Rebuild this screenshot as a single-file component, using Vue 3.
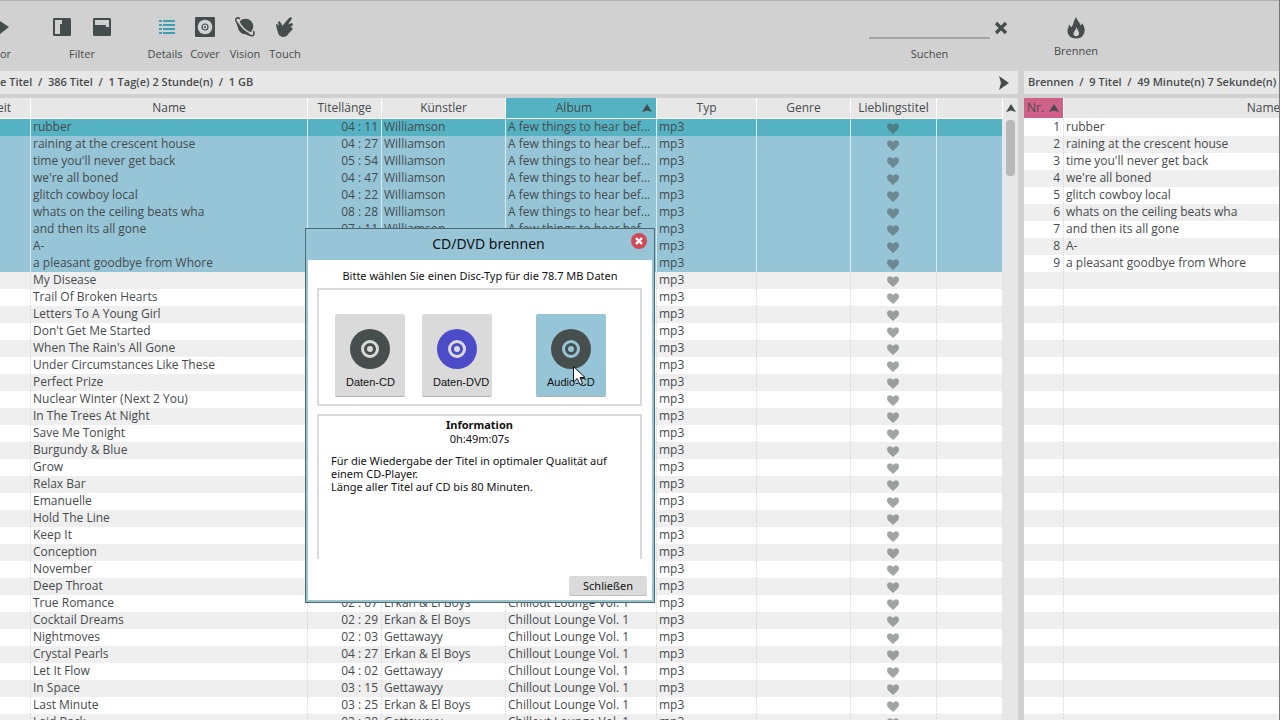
<script setup>
const names = [
  'rubber', 'raining at the crescent house', "time you'll never get back", "we're all boned",
  'glitch cowboy local', 'whats on the ceiling beats wha', 'and then its all gone', 'A-',
  'a pleasant goodbye from Whore', 'My Disease', 'Trail Of Broken Hearts', 'Letters To A Young Girl',
  "Don't Get Me Started", "When The Rain's All Gone", 'Under Circumstances Like These',
  'Perfect Prize', 'Nuclear Winter (Next 2 You)', 'In The Trees At Night', 'Save Me Tonight',
  'Burgundy & Blue', 'Grow', 'Relax Bar', 'Emanuelle', 'Hold The Line', 'Keep It', 'Conception',
  'November', 'Deep Throat', 'True Romance', 'Cocktail Dreams', 'Nightmoves', 'Crystal Pearls',
  'Let It Flow', 'In Space', 'Last Minute', 'Laid Back'
]
const lounge = 'Chillout Lounge Vol. 1'
const few = 'A few things to hear bef...'
const details = {
  0: ['04 : 11', 'Williamson', few],
  1: ['04 : 27', 'Williamson', few],
  2: ['05 : 54', 'Williamson', few],
  3: ['04 : 47', 'Williamson', few],
  4: ['04 : 22', 'Williamson', few],
  5: ['08 : 28', 'Williamson', few],
  6: ['07 : 11', 'Williamson', few],
  28: ['02 : 07', 'Erkan & El Boys', lounge],
  29: ['02 : 29', 'Erkan & El Boys', lounge],
  30: ['02 : 03', 'Gettawayy', lounge],
  31: ['04 : 27', 'Erkan & El Boys', lounge],
  32: ['04 : 02', 'Gettawayy', lounge],
  33: ['03 : 15', 'Gettawayy', lounge],
  34: ['03 : 25', 'Erkan & El Boys', lounge],
  35: ['02 : 28', 'Gettawayy', lounge]
}
const tracks = names.map((name, i) => {
  const [length = '', artist = '', album = ''] = details[i] || []
  return { name, length, artist, album, selected: i < 9 }
})
const burnList = names.map((name, i) => (i < 9 ? { nr: i + 1, name } : { nr: '', name: '' }))
const discs = [
  { label: 'Daten-CD', kind: 'dark' },
  { label: 'Daten-DVD', kind: 'violet' },
  { label: 'Audio-CD', kind: 'dark', active: true }
]
const slash = '\u00a0/\u00a0'
</script>

<template>
  <div class="app">
    <section class="library">
      <header class="toolbar">
        <button class="tool cut">
          <svg width="10" height="20" viewBox="0 0 10 20"><path d="M0 4 9 10 0 17Z" /></svg>
          <span>or</span>
        </button>
        <div class="filter">
          <div class="filter-icons">
            <button aria-label="Filter links">
              <svg width="18" height="20" viewBox="0 0 18 20"><path fill-rule="evenodd" d="M1 1H17L18 2V18L17 19H1L0 18V2ZM2 3V17H7V7H9V3Z" /></svg>
            </button>
            <button aria-label="Filter oben">
              <svg width="18" height="20" viewBox="0 0 18 20"><path fill-rule="evenodd" d="M1 1H17L18 2V18L17 19H1L0 18V2ZM2 3V8H13V10H16V3Z" /></svg>
            </button>
          </div>
          <span>Filter</span>
        </div>
        <nav class="views">
          <button class="tool">
            <svg class="teal" width="20" height="20" viewBox="0 0 20 20"><path d="M4 3h3v2H4zM8 3h12v2H8zM4 7h3v2H4zM8 7h12v2H8zM4 11h3v2H4zM8 11h12v2H8zM4 15h3v2H4zM8 15h12v2H8z" /></svg>
            <span>Details</span>
          </button>
          <button class="tool">
            <svg width="20" height="20" viewBox="0 0 20 20">
              <rect width="20" height="20" rx="1" />
              <circle cx="10" cy="10" r="7.3" fill="#d2d3d3" />
              <circle cx="10" cy="10" r="3" fill="none" stroke="#454d4c" stroke-width="1.2" />
              <circle cx="10" cy="10" r="1" />
            </svg>
            <span>Cover</span>
          </button>
          <button class="tool">
            <svg width="20" height="20" viewBox="0 0 20 20">
              <circle cx="10.500" cy="9.500" r="7.800" />
              <path d="M3 2.500C5 9 11 15 17.800 16.800" fill="none" stroke="#d1d1d1" stroke-width="1.500" />
              <path d="M5 1.500Q0-.5 1 4C3 10 10 17.500 16.500 18.800Q20 19 18.500 14" fill="none" stroke="#454d4c" stroke-width="1.600" />
            </svg>
            <span>Vision</span>
          </button>
          <button class="tool">
            <svg width="20" height="20" viewBox="0 0 20 20"><path d="M14 1Q16.500-.5 17 1.500L13 7.500 16.500 6Q18.500 6.500 17.500 8.500L15 10.200 17 10.500Q18.500 12 16.500 13.500L14 16Q12 20 8 20Q4 19.500 3 16L1 8Q1 6.500 2.500 7.500L3.800 9 3 5Q4.500 3.500 5.500 5.500L7.500 8.800Z" /></svg>
            <span>Touch</span>
          </button>
        </nav>
        <div class="search">
          <div class="search-row">
            <input id="search" type="text" />
            <button aria-label="Suche leeren">
              <svg width="14" height="14" viewBox="0 0 14 14"><path d="M2 2 12 12M12 2 2 12" fill="none" stroke="#454d4c" stroke-width="3.200" /></svg>
            </button>
          </div>
          <label for="search">Suchen</label>
        </div>
      </header>
      <div class="info">
        <span>e Titel {{ slash }} 386 Titel {{ slash }} 1 Tag(e) 2 Stunde(n) {{ slash }} 1 GB</span>
        <button class="play" aria-label="Weiter">
          <svg width="12" height="14" viewBox="0 0 12 14"><path d="M1 0 11 7 1 14 3 7Z" /></svg>
        </button>
      </div>
      <div class="list">
        <table class="grid main">
          <colgroup>
            <col class="c-time" /><col class="c-name" /><col class="c-length" /><col class="c-artist" />
            <col class="c-album" /><col class="c-type" /><col class="c-genre" /><col class="c-fav" /><col />
          </colgroup>
          <thead>
            <tr>
              <th><div class="clip"><span>eit</span></div></th>
              <th>Name</th>
              <th>Titellänge</th>
              <th>Künstler</th>
              <th class="sorted"><div class="sort"><span>Album</span><svg width="10" height="8" viewBox="0 0 10 8"><path d="M5 0 10 8 5 6.500 0 8Z" /></svg></div></th>
              <th>Typ</th>
              <th>Genre</th>
              <th>Lieblingstitel</th>
              <th></th>
            </tr>
          </thead>
          <tbody>
            <tr v-for="(t, i) in tracks" :key="i" :class="{ selected: t.selected, current: i === 0 }">
              <td></td>
              <td>{{ t.name }}</td>
              <td class="num">{{ t.length }}</td>
              <td>{{ t.artist }}</td>
              <td>{{ t.album }}</td>
              <td>mp3</td>
              <td></td>
              <td class="fav"><svg width="12" height="11" viewBox="0 0 12 11"><path d="M6 11 1 6.200Q-1 3 1 1Q3.800-1 6 2Q8.200-1 11 1Q13 3 11 6.200Z" /></svg></td>
              <td></td>
            </tr>
          </tbody>
        </table>
        <div class="scroll">
          <svg width="10" height="8" viewBox="0 0 10 8"><path d="M5 0 10 8 5 6.500 0 8Z" /></svg>
          <div class="thumb"></div>
        </div>
      </div>
    </section>

    <aside class="burn">
      <header class="toolbar">
        <button class="tool fire">
          <svg width="18" height="22" viewBox="0 0 18 22"><path fill-rule="evenodd" d="M9.500 0C9 3 13 5 13.500 8.500Q15 7.500 14.800 6C18 10 18.500 14 16.500 17.500C15 20.500 12 21.500 9 21.500C4 21.500 .5 18.500 .5 14C.5 11.500 2 10 2 7.500Q3.500 8.500 4 10.500C7 8 6 3.500 9.500 0ZM10 9.500C9.500 12.500 6.500 14 6.500 17C6.500 20 11.500 20 12 17C12.500 14 9.500 13 10 9.500Z" /></svg>
          <span>Brennen</span>
        </button>
      </header>
      <div class="info"><span>Brennen {{ slash }} 9 Titel {{ slash }} 49 Minute(n) 7 Sekunde(n)</span></div>
      <div class="list">
        <table class="grid side">
          <colgroup><col class="c-nr" /><col /></colgroup>
          <thead>
            <tr>
              <th class="pink"><div class="nr"><span>Nr.</span><svg width="10" height="8" viewBox="0 0 10 8"><path d="M5 0 10 8 5 6.500 0 8Z" /></svg></div></th>
              <th>Name</th>
            </tr>
          </thead>
          <tbody>
            <tr v-for="(b, i) in burnList" :key="i">
              <td class="num">{{ b.nr }}</td>
              <td>{{ b.name }}</td>
            </tr>
          </tbody>
        </table>
      </div>
    </aside>

    <div class="dialog" role="dialog" aria-labelledby="dialog-title">
      <div class="titlebar">
        <h1 id="dialog-title">CD/DVD brennen</h1>
        <button class="close" aria-label="Fenster schließen">
          <svg width="16" height="16" viewBox="0 0 16 16"><circle cx="8" cy="8" r="8" fill="#ce4a56" /><path d="M5 5 11 11M11 5 5 11" stroke="#fff" stroke-width="2.400" /></svg>
        </button>
      </div>
      <p class="message">Bitte wählen Sie einen Disc-Typ für die 78.7 MB Daten</p>
      <div class="discs">
        <button v-for="d in discs" :key="d.label" class="disc" :class="[d.kind, { active: d.active }]">
          <svg width="40" height="40" viewBox="0 0 40 40">
            <circle class="plate" cx="20" cy="20" r="20" />
            <circle class="ring" cx="20" cy="20" r="7.500" />
            <circle class="hub" cx="20" cy="20" r="3" />
          </svg>
          <span>{{ d.label }}</span>
        </button>
      </div>
      <div class="details">
        <h2>Information</h2>
        <p class="time">0h:49m:07s</p>
        <p class="text">Für die Wiedergabe der Titel in optimaler Qualität auf einem CD-Player.<br />Länge aller Titel auf CD bis 80 Minuten.</p>
      </div>
      <div class="actions"><button>Schließen</button></div>
      <svg class="cursor" width="13" height="20" viewBox="0 0 13 20"><path d="M.5.5V16L4.300 12.500 7 18.500 9.500 17.500 7 11.500H12Z" fill="#fff" stroke="#111" /></svg>
    </div>
  </div>
</template>

<style>
body {
  margin: 0;
  overflow: hidden;
}
</style>

<style scoped>
.app {
  position: relative;
  display: flex;
  gap: 6px;
  height: 100vh;
  overflow: hidden;
  box-sizing: border-box;
  background: #d1d1d1;
  border-right: 1px solid #777;
  color: #454b4c;
  font: 12px/17px "Open Sans", "Noto Sans", sans-serif;
}
button {
  padding: 0;
  border: 0;
  background: none;
  color: inherit;
  font: inherit;
}
svg {
  display: block;
  fill: #454d4c;
}
.library {
  flex: 1;
  min-width: 0;
  display: flex;
  flex-direction: column;
}
.burn {
  width: 255px;
  display: flex;
  flex-direction: column;
  overflow: hidden;
}
.toolbar {
  display: flex;
  height: 71px;
  padding-top: 17px;
  box-sizing: border-box;
  font-size: 11px;
}
.app::before {
  content: "";
  position: absolute;
  inset: 0 0 auto;
  height: 1px;
  background: #b0b0b0;
}
.tool {
  display: flex;
  flex-direction: column;
  align-items: center;
  width: 40px;
  height: 46px;
  gap: 8px;
}
.cut {
  width: 20px;
  align-items: flex-start;
}
.filter {
  display: flex;
  flex-direction: column;
  align-items: center;
  gap: 8px;
  width: 80px;
  margin-left: 22px;
}
.filter-icons {
  display: flex;
  gap: 22px;
}
.views {
  display: flex;
  margin-left: 23px;
}
.teal {
  fill: #3f9fb4;
}
.search {
  margin-left: auto;
  margin-right: 10px;
}
.search-row {
  display: flex;
  align-items: center;
  gap: 4px;
  height: 22px;
}
.search input {
  width: 121px;
  height: 22px;
  box-sizing: border-box;
  padding: 0 2px;
  border: 0;
  border-bottom: 2px solid #a5a5a5;
  background: none;
  outline: none;
}
.search label {
  display: block;
  width: 121px;
  margin-top: 6px;
  text-align: center;
}
.fire {
  width: 60px;
  margin-left: 22px;
  gap: 3px;
}
.info {
  display: flex;
  align-items: center;
  justify-content: space-between;
  height: 23px;
  margin-bottom: 4px;
  background: #e7e7e7;
  font-size: 11px;
  font-weight: 600;
  white-space: nowrap;
}
.info span {
  padding-bottom: 2px;
}
.burn .info {
  padding-left: 4px;
}
.play {
  margin-right: 8px;
}
.list {
  flex: 1;
  min-height: 0;
  display: flex;
  overflow: hidden;
  background: #e7e7e7;
}
.grid {
  table-layout: fixed;
  border-collapse: separate;
  border-spacing: 0;
  align-self: flex-start;
}
.main {
  flex: 1;
  width: 100%;
}
.side {
  flex: none;
  width: 440px;
}
.c-time { width: 31px; }
.c-name { width: 277px; }
.c-length { width: 74px; }
.c-artist { width: 124px; }
.c-album { width: 151px; }
.c-type { width: 100px; }
.c-genre { width: 94px; }
.c-fav { width: 86px; }
.c-nr { width: 40px; }
th {
  height: 20px;
  padding: 0;
  border-right: 1px solid #fff;
  border-bottom: 1px solid #fff;
  background: #e7e7e7;
  font-weight: 400;
  line-height: 20px;
}
th.sorted {
  background: #55b2c3;
}
th.pink {
  background: #cf6088;
}
.clip {
  display: flex;
  justify-content: flex-end;
  padding-right: 19px;
  overflow: hidden;
}
.sort {
  display: grid;
  grid-template-columns: 1fr auto;
  align-items: center;
  padding: 0 4px 0 0;
}
.nr {
  display: flex;
  align-items: center;
  justify-content: space-between;
  padding: 0 4px 0 3px;
}
td {
  height: 17px;
  padding: 0 2px 2px;
  box-sizing: border-box;
  border-right: 1px dotted #d8d8d8;
  background: #fff;
  line-height: 15px;
  white-space: nowrap;
  overflow: hidden;
}
tr:nth-child(even) td {
  background: #efefef;
}
tr.selected td {
  background: #97c5d8;
  border-right: 1px solid #d9eaf0;
}
tr.current td {
  background: #55b2c3;
}
.num {
  text-align: right;
  padding-right: 3px;
}
td.fav {
  padding: 1px 2px 0 0;
}
.fav svg {
  margin: 0 auto;
  opacity: .5;
}
.scroll {
  width: 15px;
  display: flex;
  flex-direction: column;
  align-items: center;
  gap: 8px;
  padding-top: 6px;
}
.thumb {
  width: 9px;
  height: 56px;
  border-radius: 4px;
  background: #b8b8b8;
}
.dialog {
  position: absolute;
  left: 305px;
  top: 228px;
  width: 350px;
  height: 375px;
  box-sizing: border-box;
  border: 1px solid #4a6874;
  background: #fff;
  box-shadow: inset 0 0 0 2px #98c6cc;
  padding: 0 2px 2px;
  color: #111;
  font-family: "Noto Sans", sans-serif;
  font-size: 11px;
  line-height: 13px;
}
.titlebar {
  display: grid;
  grid-template-columns: 1fr auto;
  height: 31px;
  margin: 0 -2px;
  padding: 0 7px 0 40px;
  background: #98c4d7;
}
h1, h2, p {
  margin: 0;
}
h1 {
  font-size: 14px;
  font-weight: 400;
  line-height: 30px;
  text-align: center;
}
.close {
  align-self: start;
  margin-top: 4px;
}
.message {
  padding: 9px 0 6px;
  text-align: center;
}
.discs {
  display: flex;
  gap: 17px;
  height: 118px;
  margin: 0 10px 8px 9px;
  padding: 24px 16px 0;
  box-sizing: border-box;
  border: 2px solid #d9d9d9;
}
.disc {
  display: flex;
  flex-direction: column;
  align-items: flex-start;
  gap: 7px;
  width: 70px;
  height: 83px;
  padding: 15px 0 0 11px;
  box-sizing: border-box;
  border-bottom: 1px solid #b0b0b0;
  border-radius: 2px;
  background: #dadada;
  font-family: "Liberation Sans", sans-serif;
  white-space: nowrap;
}
.disc svg {
  margin-left: 4px;
}
.disc.active {
  margin-left: 27px;
  background: #97c5d8;
}
.plate { fill: #464f4d; }
.violet .plate { fill: #4d4cc8; }
.ring {
  fill: none;
  stroke: #dadada;
  stroke-width: 3;
}
.hub { fill: #dadada; }
.active .ring { stroke: #97c5d8; }
.active .hub { fill: #97c5d8; }
.details {
  height: 145px;
  margin: 0 10px 17px 9px;
  padding: 2px 12px 0;
  box-sizing: border-box;
  border: 2px solid #d9d9d9;
  border-bottom: 0;
}
h2 {
  font-size: 11px;
  line-height: 14px;
  text-align: center;
}
.time {
  margin-bottom: 9px;
  text-align: center;
}
.actions {
  display: flex;
  justify-content: flex-end;
  padding-right: 5px;
}
.actions button {
  width: 78px;
  height: 20px;
  border-bottom: 1px solid #c0c0c0;
  border-radius: 2px;
  background: #dadada;
}
.cursor {
  position: absolute;
  left: 267px;
  top: 137px;
}
</style>
